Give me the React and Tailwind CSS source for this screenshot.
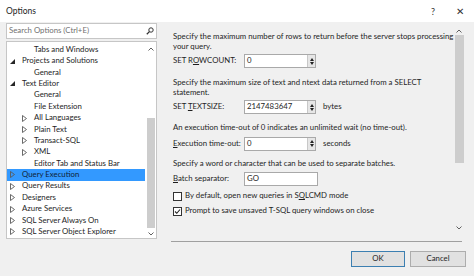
import React from 'react'

const font = { fontFamily: '"Lato", "Open Sans", sans-serif' }

function Expanded() {
  return (
    <svg width="5" height="5" viewBox="0 0 5 5">
      <path d="M5 0 L5 5 L0 5 Z" fill="#262626" />
    </svg>
  )
}

function Collapsed() {
  return (
    <svg width="5" height="7" viewBox="0 0 5 7">
      <path d="M0.5 0.5 L4.5 3.5 L0.5 6.5 Z" fill="none" stroke="#5a5a5a" strokeWidth="0.9" />
    </svg>
  )
}

const treeItems = [
  { label: 'Tabs and Windows', level: 1 },
  { label: 'Projects and Solutions', level: 0, arrow: 'open' },
  { label: 'General', level: 1 },
  { label: 'Text Editor', level: 0, arrow: 'open' },
  { label: 'General', level: 1 },
  { label: 'File Extension', level: 1 },
  { label: 'All Languages', level: 1, arrow: 'closed' },
  { label: 'Plain Text', level: 1, arrow: 'closed' },
  { label: 'Transact-SQL', level: 1, arrow: 'closed' },
  { label: 'XML', level: 1, arrow: 'closed' },
  { label: 'Editor Tab and Status Bar', level: 1 },
  { label: 'Query Execution', level: 0, arrow: 'closed', selected: true },
  { label: 'Query Results', level: 0, arrow: 'closed' },
  { label: 'Designers', level: 0, arrow: 'closed' },
  { label: 'Azure Services', level: 0, arrow: 'closed' },
  { label: 'SQL Server Always On', level: 0, arrow: 'closed' },
  { label: 'SQL Server Object Explorer', level: 0, arrow: 'closed' },
]

function TreeRow({ item }) {
  return (
    <div
      className={`flex h-[11.4px] items-center ${
        item.selected ? 'bg-[#3399ff] text-[#0f1f36]' : 'text-[#1e1e1e]'
      }`}
    >
      <div className={item.level === 1 ? 'w-[27px] shrink-0' : 'w-[15px] shrink-0'}>
        <div className="ml-auto flex w-[12px] justify-start">
          {item.arrow === 'open' && <Expanded />}
          {item.arrow === 'closed' && <Collapsed />}
        </div>
      </div>
      <span className="whitespace-nowrap">{item.label}</span>
    </div>
  )
}

function Caret({ up }) {
  return (
    <svg width="6" height="4" viewBox="0 0 6 4">
      <path
        d={up ? 'M0.5 3.5 L3 1 L5.5 3.5' : 'M0.5 0.5 L3 3 L5.5 0.5'}
        fill="none"
        stroke="#606060"
        strokeWidth="1"
      />
    </svg>
  )
}

function Spinner() {
  return (
    <div className="flex h-full w-[8px] flex-col items-center justify-center gap-[1px] border-l border-[#c8c8c8] bg-[#e6e6e6]">
      <svg width="4" height="3" viewBox="0 0 4 3">
        <path d="M0 3 L2 0 L4 3 Z" fill="#222" />
      </svg>
      <svg width="4" height="3" viewBox="0 0 4 3">
        <path d="M0 0 L4 0 L2 3 Z" fill="#222" />
      </svg>
    </div>
  )
}

function NumberRow({ label, value, unit }) {
  return (
    <div className="flex h-[14px] items-center">
      <div className="w-[71px] shrink-0 whitespace-nowrap">{label}</div>
      <div className="flex h-[14px] w-[72px] items-stretch border border-[#a9a9a9] bg-white">
        <div className="flex flex-1 items-center pl-[2px]">{value}</div>
        <Spinner />
      </div>
      {unit && <span className="ml-[7px]">{unit}</span>}
    </div>
  )
}

function Check({ checked }) {
  return (
    <div className="flex h-[9px] w-[9px] shrink-0 items-center justify-center border border-[#333] bg-white">
      {checked && (
        <svg width="7" height="7" viewBox="0 0 7 7">
          <path d="M1 3.5 L2.8 5.3 L6 1.5" fill="none" stroke="#222" strokeWidth="1.1" />
        </svg>
      )}
    </div>
  )
}

export default function App() {
  return (
    <div
      className="flex h-[276px] w-[474px] flex-col overflow-hidden bg-[#f0f0f0] text-[7.8px] leading-none text-[#1e1e1e]"
      style={font}
    >
      {/* Title bar */}
      <div className="flex h-[22px] shrink-0 items-center bg-white">
        <span className="pl-[6px] text-[8.5px]">Options</span>
        <span className="ml-auto text-[9px] text-[#333]">?</span>
        <span className="ml-[21px] mr-[10px] text-[10px] text-[#333]">✕</span>
      </div>

      <div className="flex h-[218px] shrink-0">
        {/* Left column */}
        <div className="ml-[6px] flex w-[151px] shrink-0 flex-col pt-[1px]">
          <div className="flex h-[16px] items-center border border-[#c6c6c6] bg-white pl-[2px] pr-[2px]">
            <span className="text-[#707070]">Search Options (Ctrl+E)</span>
            <svg className="ml-auto" width="8" height="8" viewBox="0 0 8 8">
              <circle cx="5" cy="3" r="2.2" fill="none" stroke="#333" strokeWidth="1" />
              <path d="M3.4 4.6 L0.8 7.2" stroke="#333" strokeWidth="1.3" />
            </svg>
          </div>
          <div className="mt-[2px] flex h-[198px] border border-[#c6c6c6] bg-white">
            <div className="flex-1 overflow-hidden pt-[2px]">
              {treeItems.map((item, i) => (
                <TreeRow key={i} item={item} />
              ))}
            </div>
            <div className="flex w-[11px] flex-col items-center pt-[5px]">
              <Caret up />
              <div className="mt-[67px] h-[110px] w-[8px] bg-[#cdcdcd]" />
              <div className="mt-[4px]">
                <Caret />
              </div>
            </div>
          </div>
        </div>

        {/* Right panel */}
        <div className="flex flex-1">
          <div className="flex-1 whitespace-nowrap pl-[16px] pt-[10px]">
            <p className="leading-[9.5px]">
              Specify the maximum number of rows to return before the server stops processing
              <br />
              your query.
            </p>
            <div className="mt-[3px]">
              <NumberRow
                label={
                  <>
                    SET R<u>O</u>WCOUNT:
                  </>
                }
                value="0"
              />
            </div>
            <p className="mt-[10px] leading-[9.5px]">
              Specify the maximum size of text and ntext data returned from a SELECT
              <br />
              statement.
            </p>
            <div className="mt-[3px]">
              <NumberRow
                label={
                  <>
                    SET <u>T</u>EXTSIZE:
                  </>
                }
                value="2147483647"
                unit="bytes"
              />
            </div>
            <p className="mt-[9px] leading-[9.5px]">
              An execution time-out of 0 indicates an unlimited wait (no time-out).
            </p>
            <div className="mt-[4px]">
              <NumberRow
                label={
                  <>
                    <u>E</u>xecution time-out:
                  </>
                }
                value="0"
                unit="seconds"
              />
            </div>
            <p className="mt-[8px] leading-[9.5px]">
              Specify a word or character that can be used to separate batches.
            </p>
            <div className="mt-[4px] flex h-[14px] items-center">
              <div className="w-[71px] shrink-0">
                <u>B</u>atch separator:
              </div>
              <div className="flex h-[14px] w-[74px] items-center border border-[#a9a9a9] bg-white pl-[2px]">
                GO
              </div>
            </div>
            <div className="mt-[4px] flex h-[12px] items-center gap-[3px]">
              <Check />
              <span>
                By default, open new queries in S<u>Q</u>LCMD mode
              </span>
            </div>
            <div className="mt-[3px] flex h-[12px] items-center gap-[3px]">
              <Check checked />
              <span>Prompt to save unsaved T-SQL query windows on close</span>
            </div>
          </div>
          <div className="mr-[10px] flex w-[10px] flex-col items-center pt-[7px]">
            <Caret up />
            <div className="mt-[2px] h-[128px] w-[9px] bg-[#cdcdcd]" />
            <div className="mt-[63px]">
              <Caret />
            </div>
          </div>
        </div>
      </div>

      {/* Footer */}
      <div className="ml-[171px] mt-[1px] h-px w-[291px] bg-[#a0a0a0]" />
      <div className="mt-[9px] flex justify-end gap-[5px] pr-[8px]">
        <button className="flex h-[16px] w-[54px] items-center justify-center border border-[#3c7fb1] bg-[#e1e1e1]">
          OK
        </button>
        <button className="flex h-[16px] w-[56px] items-center justify-center border border-[#adadad] bg-[#e1e1e1]">
          Cancel
        </button>
      </div>
    </div>
  )
}
